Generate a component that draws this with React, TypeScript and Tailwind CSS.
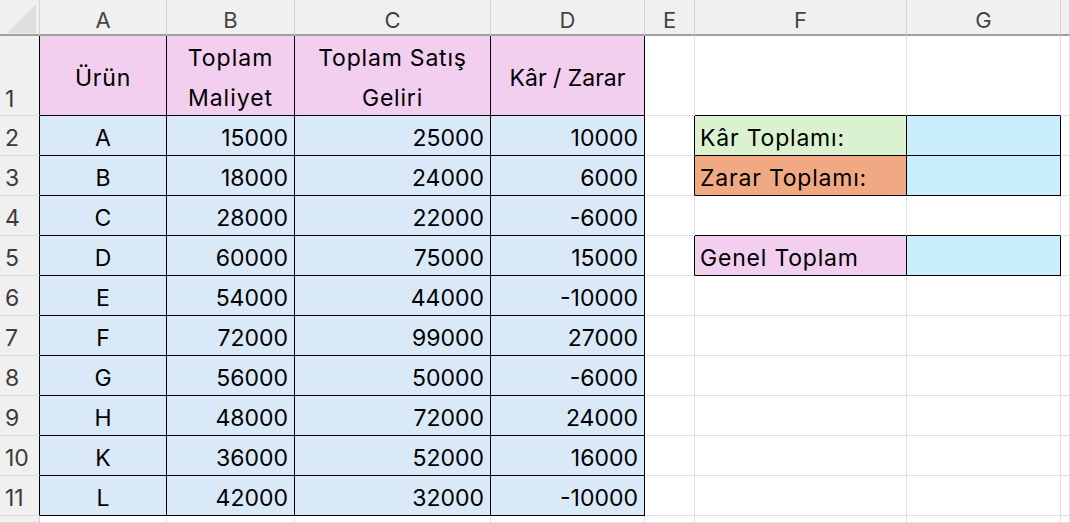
import React from 'react';

const COLS = ['A', 'B', 'C', 'D', 'E', 'F', 'G', ''];

const rows: [string, number, number, number][] = [
  ['A', 15000, 25000, 10000],
  ['B', 18000, 24000, 6000],
  ['C', 28000, 22000, -6000],
  ['D', 60000, 75000, 15000],
  ['E', 54000, 44000, -10000],
  ['F', 72000, 99000, 27000],
  ['G', 56000, 50000, -6000],
  ['H', 48000, 72000, 24000],
  ['K', 36000, 52000, 16000],
  ['L', 42000, 32000, -10000],
];

// right-side summary block, keyed by row number
const summary: Record<number, { label: string; bg: string }> = {
  2: { label: 'Kâr Toplamı:', bg: 'bg-[#daf2d0]' },
  3: { label: 'Zarar Toplamı:', bg: 'bg-[#f1a983]' },
  5: { label: 'Genel Toplam', bg: 'bg-[#f2cfee]' },
};

const grid = 'border-r border-b border-[#e0e0e0]';
const boxed = 'border-r border-b border-black';

const RowHead = ({ n, bottom, dark }: { n?: number; bottom?: boolean; dark?: boolean }) => (
  <div
    className={`bg-[#f0f0f0] text-[#3b3b3b] pl-[5px] flex ${bottom ? 'items-end pb-[4px]' : 'items-center pt-[6px]'} border-b border-[#dcdcdc] border-r ${dark ? 'border-r-black' : 'border-r-[#d0d0d0]'}`}
  >
    {n}
  </div>
);

const App: React.FC = () => {
  return (
    <div
      className="w-[1070px] h-[523px] overflow-hidden bg-white text-[23px] leading-none text-black"
      style={{ fontFamily: 'Inter, "Noto Sans", sans-serif' }}
    >
      <div className="grid grid-cols-[40px_127px_128px_196px_154px_50px_212px_154px_1fr] grid-rows-[36px_80px_repeat(10,40px)_1fr] h-full">
        {/* column headers */}
        <div className="bg-[#f0f0f0] border-r border-[#d4d4d4] border-b-2 border-b-[#a0a0a0] relative">
          <div className="absolute left-[7px] top-[4px] w-0 h-0 border-l-[29px] border-l-transparent border-b-[29px] border-b-[#dfdfdf]" />
        </div>
        {COLS.map((c, i) => (
          <div
            key={i}
            className="bg-[#f0f0f0] text-[#444] text-[22px] flex items-center justify-center pt-[5px] border-r border-r-[#d4d4d4] border-b-2 border-b-[#a0a0a0]"
          >
            {c}
          </div>
        ))}

        {/* row 1 */}
        <RowHead n={1} bottom dark />
        <div className={`${boxed} bg-[#f2cfee] flex items-center justify-center pt-[6px] tracking-[0.8px]`}>Ürün</div>
        <div className={`${boxed} bg-[#f2cfee] flex flex-col items-center justify-center leading-[40px] pt-[4px] tracking-[1px]`}>
          <span>Toplam</span>
          <span>Maliyet</span>
        </div>
        <div className={`${boxed} bg-[#f2cfee] flex flex-col items-center justify-center leading-[40px] pt-[4px] tracking-[0.8px]`}>
          <span>Toplam Satış</span>
          <span>Geliri</span>
        </div>
        <div className={`${boxed} bg-[#f2cfee] flex items-center justify-center pt-[6px]`}>Kâr / Zarar</div>
        <div className={grid} />
        <div className={`${grid} border-b-black`} />
        <div className={`${grid} border-b-black`} />
        <div className={grid} />

        {rows.map(([name, cost, revenue, diff], i) => {
          const n = i + 2;
          const s = summary[n];
          const topOfBox = n === 4; // row 4 sits above Genel Toplam
          return (
            <React.Fragment key={n}>
              <RowHead n={n} dark />
              <div className={`${boxed} bg-[#dae9f8] flex items-center justify-center pt-[6px]`}>{name}</div>
              <div className={`${boxed} bg-[#dae9f8] flex items-center justify-end pr-[6px] pt-[6px]`}>{cost}</div>
              <div className={`${boxed} bg-[#dae9f8] flex items-center justify-end pr-[6px] pt-[6px]`}>{revenue}</div>
              <div className={`${boxed} bg-[#dae9f8] flex items-center justify-end pr-[6px] pt-[6px]`}>{diff}</div>
              <div className={`${grid} ${s ? 'border-r-black' : ''}`} />
              {s ? (
                <>
                  <div className={`${boxed} ${s.bg} flex items-center pl-[5px] pt-[6px] tracking-[0.8px]`}>{s.label}</div>
                  <div className={`${boxed} bg-[#caedfb]`} />
                </>
              ) : (
                <>
                  <div className={`${grid} ${topOfBox ? 'border-b-black' : ''}`} />
                  <div className={`${grid} ${topOfBox ? 'border-b-black' : ''}`} />
                </>
              )}
              <div className={grid} />
            </React.Fragment>
          );
        })}

        {/* row 12, cut off by the window */}
        <RowHead />
        {COLS.map((_, i) => (
          <div key={i} className={grid} />
        ))}
      </div>
    </div>
  );
};

export default App;
